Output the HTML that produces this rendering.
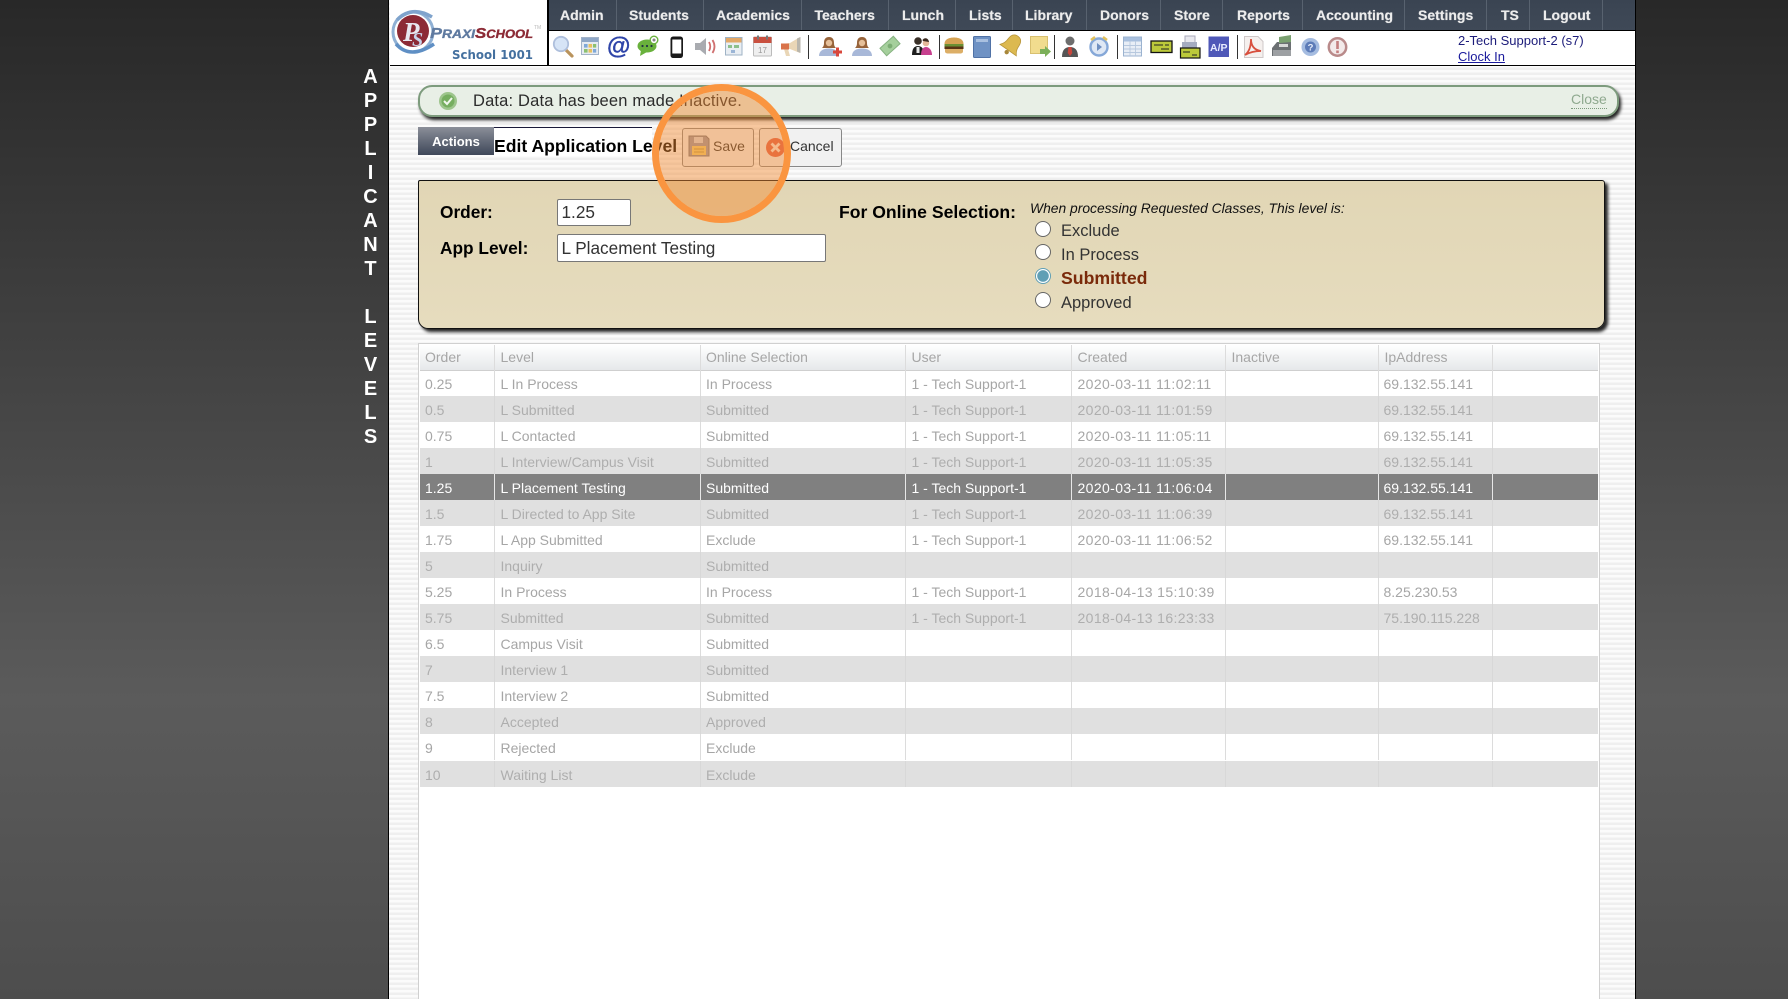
<!DOCTYPE html>
<html lang="en"><head><meta charset="utf-8"><title>Applicant Levels</title>
<style>
*{box-sizing:border-box}
html,body{margin:0;padding:0;width:1788px;height:999px;overflow:hidden}
body{position:relative;font-family:"Liberation Sans",Arial,sans-serif;background:linear-gradient(#282828 0,#3a3a3a 25%,#5b5b5b 70%,#4d4d4d 100%)}
.a{position:absolute}
#main{left:388px;top:0;width:1248px;height:999px;border-left:1.5px solid #000;border-right:1.5px solid #000;background:repeating-linear-gradient(#fbfbfb 0,#fbfbfb 2.5px,#efefef 2.5px,#efefef 5px)}
#side{left:350.5px;top:64.5px;width:40px;text-align:center;color:#fff;font:bold 20px/24px "Liberation Sans",Arial,sans-serif}
#hdr{left:389.5px;top:0;width:1245px;height:66px;background:#fff;border-bottom:1.5px solid #000}
#navbg{left:547px;top:0;width:1088px;height:31px;background:linear-gradient(#3a4452,#3f4957);border-bottom:1.5px solid #000;border-left:1.5px solid #000}
#vl{left:547px;top:0;width:1.5px;height:65px;background:#000}
.t{position:absolute;top:0;height:30px;line-height:30px;color:#ececec;font-weight:bold;font-size:14px;border-right:1px solid #58626f;padding-left:13px;white-space:nowrap;text-shadow:0 0 .6px #ececec}
#usr{left:1458px;top:33px;font-size:13px;line-height:16px;color:#1c1c7a}
#usr u{color:#1a1a9c}
#alert{left:418px;top:85px;width:1201px;height:32px;background:#e8efe6;border:2.5px solid #7d9b7d;border-radius:14px;box-shadow:2px 3px 3px #222}
#alerttx{left:473px;top:91px;font-size:16.5px;letter-spacing:.17px;line-height:20px;color:#2b2b2b}
#close{left:1571px;top:91px;font-size:14px;line-height:17px;color:#8fa98f;border-bottom:1px dotted #7d9b7d}
#act{left:418px;top:127px;width:76px;height:28px;background:linear-gradient(#8b8f99,#3e4759);color:#fff;font-weight:bold;font-size:13px;line-height:29.5px;text-align:center}
#ttl{left:494px;top:127px;width:158px;height:29px;background:#fff;border-top:1.5px solid #1a1a3a}
#ttltx{left:494px;top:135px;font-weight:bold;font-size:17.6px;line-height:22px;color:#000;white-space:nowrap}
.btn{position:absolute;top:128px;height:39px;background:#f1f1f1;border:1px solid #888;border-radius:3px;font-size:14px;line-height:35px;color:#333}
#panel{left:418px;top:180px;width:1187px;height:149px;background:linear-gradient(#e1d6b5,#e6dcbe);border:1.5px solid #111;border-radius:2px 3px 10px 10px;box-shadow:3px 3px 3px #222}
.lb{position:absolute;font-weight:bold;font-size:17.3px;line-height:20px;color:#000;white-space:nowrap}
.inp{position:absolute;background:#fff;border:1px solid #777;border-radius:2px;font-size:17.2px;color:#333;padding-left:3.5px}
.rad{position:absolute;left:1035px;width:16px;height:16px;border-radius:50%;background:#fff;border:1.5px solid #666}
.rl{position:absolute;left:1061px;font-size:16.5px;line-height:20px;color:#333}
#tbl{left:418px;top:343px;width:1182px;height:656px;background:#fff;border:1.5px solid #d0d0d0;border-bottom:0}
.g{display:grid;grid-template-columns:75px 206px 205px 166px 154px 153px 114px 105px;position:absolute;left:.5px;width:1178.5px;height:26.02px;font-size:14px;line-height:28.5px;color:#a6a6a6}
.g div{border-right:1px solid #dcdcdc;padding-left:6px;white-space:nowrap;overflow:hidden}
.g div:first-child{padding-left:5.5px}
.g div:nth-child(3){padding-left:5.5px}
.g div:nth-child(5){letter-spacing:.38px}
.g div:nth-child(7){padding-left:5px}
.g div:last-child{border-right:0}
.h{background:linear-gradient(#fff,#e6e8ea);height:26.5px;border-bottom:1.5px solid #cfcfcf;top:.5px;line-height:25px}
.h div:nth-child(5){letter-spacing:0}
.e{background:#e0e0e0;color:#aeaeae}
.e div{border-right-color:#d8d8d8}
.s{background:#808080;color:#fff}
.s div{border-right-color:#e8e8e8}
#circ{left:652px;top:84px;width:139px;height:139px;border-radius:50%;border:7px solid #fa9540;background:rgba(242,138,48,.46);background-clip:padding-box}
</style></head>
<body>
<div class="a" id="main"></div>
<div class="a" id="side">A<br>P<br>P<br>L<br>I<br>C<br>A<br>N<br>T<br>&nbsp;<br>L<br>E<br>V<br>E<br>L<br>S</div>
<div class="a" id="hdr"></div>
<div class="a" id="navbg"></div>
<div class="a" id="vl"></div>
<div class="t" style="left:547px;width:70px">Admin</div>
<div class="t" style="left:617px;width:87px;padding-left:12px">Students</div>
<div class="t" style="left:704px;width:98px;padding-left:12px">Academics</div>
<div class="t" style="left:802px;width:87px;padding-left:12.5px">Teachers</div>
<div class="t" style="left:889px;width:67px;padding-left:13px">Lunch</div>
<div class="t" style="left:956px;width:57px;padding-left:13px">Lists</div>
<div class="t" style="left:1013px;width:74px;padding-left:12px">Library</div>
<div class="t" style="left:1087px;width:74px;padding-left:13px">Donors</div>
<div class="t" style="left:1161px;width:62px;padding-left:13px">Store</div>
<div class="t" style="left:1223px;width:80px;padding-left:14px">Reports</div>
<div class="t" style="left:1303px;width:102px;padding-left:13px">Accounting</div>
<div class="t" style="left:1405px;width:82px;padding-left:13px">Settings</div>
<div class="t" style="left:1487px;width:43px;padding-left:14px">TS</div>
<div class="t" style="left:1530px;width:73px;padding-left:13px">Logout</div>

<svg class="a" style="left:0;top:0" width="1788" height="66" viewBox="0 0 1788 66">
<!-- logo -->
<ellipse cx="413" cy="32" rx="20" ry="20" fill="none" stroke="#8fb0d4" stroke-width="3"/>
<path d="M396 44 Q410 60 434 44" fill="none" stroke="#5f8fc4" stroke-width="3.5"/>
<path d="M397 20 Q412 5 432 17" fill="none" stroke="#7fa3cc" stroke-width="3.5"/>
<circle cx="413" cy="31" r="16" fill="#8c2a35"/>
<text x="403" y="41" font-family="Liberation Serif,serif" font-style="italic" font-weight="bold" font-size="27" fill="#e8e8f0">P</text>
<text x="412" y="46" font-family="Liberation Serif,serif" font-style="italic" font-weight="bold" font-size="20" fill="#c8d4ea">S</text>
<text x="430" y="38" font-family="Liberation Sans,sans-serif" font-style="italic" font-weight="bold" font-size="15" fill="#5f7aa0" stroke="#5f7aa0" stroke-width=".35" textLength="45" lengthAdjust="spacingAndGlyphs">P<tspan font-size="11.5">RAXI</tspan></text>
<text x="475" y="38" font-family="Liberation Sans,sans-serif" font-style="italic" font-weight="bold" font-size="15" fill="#8c2a35" stroke="#8c2a35" stroke-width=".35" textLength="58" lengthAdjust="spacingAndGlyphs">S<tspan font-size="11.5">CHOOL</tspan></text>
<text x="534" y="29" font-family="Liberation Sans,sans-serif" font-size="5" fill="#bbb">TM</text>
<text x="452" y="59" font-family="DejaVu Sans,sans-serif" font-weight="bold" font-size="12" fill="#44709f" textLength="81" lengthAdjust="spacingAndGlyphs">School 1001</text>
<!-- magnifier -->
<line x1="566" y1="50" x2="572" y2="56" stroke="#b9935c" stroke-width="3.2" stroke-linecap="round"/>
<circle cx="561" cy="44" r="7.2" fill="#d6e4f6" stroke="#aebfdc" stroke-width="1.8"/>
<!-- grid cal -->
<rect x="581.5" y="37.5" width="17" height="17" fill="#e6ebf2" stroke="#a3b3c8"/><rect x="582" y="38" width="16" height="4" fill="#8fa7c7"/>
<rect x="584" y="44" width="3.6" height="3.6" fill="#7fa8d8"/><rect x="588.5" y="44" width="3.6" height="3.6" fill="#e8c060"/><rect x="593" y="44" width="3.2" height="3.6" fill="#8cc070"/><rect x="584" y="49" width="3.6" height="3.6" fill="#8cc070"/><rect x="588.5" y="49" width="3.6" height="3.6" fill="#e8c060"/><rect x="593" y="49" width="3.2" height="3.6" fill="#7fa8d8"/>
<!-- @ -->
<text x="607" y="54" font-family="Liberation Sans,sans-serif" font-weight="bold" font-size="24" fill="#2e44a8" stroke="#2e44a8" stroke-width=".3">@</text>
<!-- chat -->
<ellipse cx="647" cy="46" rx="9.5" ry="6.5" fill="#69b13c"/><path d="M641 50 L640 56 L647 52Z" fill="#69b13c"/>
<circle cx="642.5" cy="46" r="1.1" fill="#234"/><circle cx="647" cy="46" r="1.1" fill="#234"/><circle cx="651.5" cy="46" r="1.1" fill="#234"/>
<circle cx="654" cy="40" r="3.8" fill="#fff" stroke="#69b13c" stroke-width="1.4"/><path d="M652.4 40H655.6M654 38.4V41.6" stroke="#555" stroke-width=".9"/>
<!-- phone -->
<rect x="670.5" y="36.5" width="12.5" height="21.5" rx="2.6" fill="#1a1a1a"/><rect x="672.3" y="39.5" width="9" height="14" fill="#fff"/>
<!-- speaker -->
<path d="M695 43H700L706 38V55L700 50H695Z" fill="#a9abb0"/><path d="M709 42Q711.5 46.5 709 51" fill="none" stroke="#d07070" stroke-width="1.8"/><path d="M712.5 40Q716.5 46.5 712.5 53" fill="none" stroke="#d07070" stroke-width="1.8"/>
<!-- table cal -->
<rect x="725.5" y="37.5" width="16.5" height="17.5" fill="#e9eef3" stroke="#9fb3c6"/><rect x="726" y="38" width="15.5" height="4.5" fill="#e2a868"/><rect x="728" y="45" width="4" height="3" fill="#8cbf8c"/><rect x="734" y="45" width="5" height="3" fill="#8cbf8c"/><rect x="731" y="50" width="4" height="3" fill="#9bb5d6"/>
<!-- calendar -->
<rect x="753.5" y="37" width="18" height="19" rx="1" fill="#efefef" stroke="#bbb"/><rect x="753.5" y="37" width="18" height="6" fill="#c9503f"/><rect x="757" y="35.5" width="2" height="4" fill="#777"/><rect x="766" y="35.5" width="2" height="4" fill="#777"/>
<text x="758" y="53" font-family="Liberation Sans,sans-serif" font-size="8" fill="#999">17</text>
<!-- megaphone -->
<path d="M781 44L790 43L800 37V53L790 49L788 49L790 56H786L784 49L781 49Z" fill="#e9d6b6"/><path d="M781 43.5H789V49.5H781Z" fill="#d9734a"/><path d="M797 38.5L800.5 37V53L797 51.5Z" fill="#b9b6ad"/>
<rect x="808" y="35" width="1" height="24" fill="#333"/>
<!-- person plus -->
<path d="M829 37c-4 0-5 3-5 6 0 3-1 4-2 5h14c-1-1-2-2-2-5 0-3-1-6-5-6z" fill="#97633a"/><circle cx="829" cy="43" r="3.2" fill="#e6c09a"/><path d="M819 56c0-5 4-7.5 10-7.5s9 2.5 9 7.5z" fill="#a8b8d8"/><path d="M836 47.5h3v3h3v3h-3v3h-3v-3h-3v-3h3z" fill="#d8473c"/>
<!-- person -->
<path d="M862 37c-4 0-5 3-5 6 0 3-1 4-2 5h14c-1-1-2-2-2-5 0-3-1-6-5-6z" fill="#97633a"/><circle cx="862" cy="43" r="3.2" fill="#e6c09a"/><path d="M852 56c0-5 4-7.5 10-7.5s10 2.5 10 7.5z" fill="#a8b8d8"/>
<!-- money -->
<g transform="rotate(-42 890 46)"><rect x="881" y="41" width="18" height="10" fill="#a5cf9c" stroke="#86b280"/><circle cx="890" cy="46" r="2.4" fill="#7cad74"/></g>
<!-- people -->
<circle cx="918" cy="41" r="3.8" fill="#3a3028"/><path d="M912 55c0-6 2-9 6-9s6 3 6 9z" fill="#1e1e1e"/><circle cx="926" cy="43" r="3.3" fill="#e4b99a"/><path d="M922.5 40c2-3 6-2 6.5 2l-6-1z" fill="#3a2a20"/><path d="M921 55c0-5 2-8 5-8s6 3 6 8z" fill="#c73f8e"/><rect x="916.5" y="47" width="3" height="6" fill="#e8e8e8"/>
<rect x="939" y="35" width="1" height="24" fill="#333"/>
<!-- burger -->
<path d="M944.5 44c0-5 5-6.5 9.5-6.5s9.5 1.5 9.5 6.5z" fill="#d6a354"/><rect x="944.5" y="44" width="19" height="2.5" fill="#6b8f33"/><rect x="944.5" y="46.5" width="19" height="2.5" fill="#5a3415"/><path d="M945 49h18v2.5c0 1-1 2-3 2h-12c-2 0-3-1-3-2z" fill="#dcae66"/>
<!-- book -->
<rect x="973.5" y="36.5" width="17" height="21" rx="1" fill="#6f92c4" stroke="#5072a6"/><rect x="976" y="39" width="12" height="3" fill="#a9c0e0"/>
<!-- bell -->
<g transform="rotate(35 1011 46)"><path d="M1011 34c-5 0-6.5 3.5-6.5 8.5 0 5-2.5 7-3.5 8.5h20c-1-1.5-3.5-3.5-3.5-8.5 0-5-1.5-8.5-6.5-8.5z" fill="#dcb950" stroke="#b8963c" stroke-width=".8"/><circle cx="1011" cy="53.5" r="2.2" fill="#a8873a"/></g>
<!-- note arrow -->
<rect x="1030.5" y="36.5" width="17" height="17" fill="#f1dc8e" stroke="#d8c070"/><path d="M1040 49h5v-3l6 5.5-6 5.5v-3h-5z" fill="#7cb05a"/>
<rect x="1054" y="35" width="1" height="24" fill="#333"/>
<!-- man -->
<circle cx="1070" cy="41" r="4.5" fill="#6d6d6d"/><path d="M1062 57c0-7 3-10 8-10s8 3 8 10z" fill="#555"/><path d="M1068.5 47h3l.8 6-2.3 3-2.3-3z" fill="#c9463c"/>
<!-- clock -->
<circle cx="1099" cy="47" r="8.5" fill="#dfe8f5" stroke="#86a8d8" stroke-width="2.4"/><path d="M1097 43l5 4-5 4z" fill="#6f8fc0"/><path d="M1091 40l4-3M1107 40l-4-3" stroke="#e3c25c" stroke-width="2.5"/>
<rect x="1117" y="35" width="1" height="24" fill="#333"/>
<!-- table -->
<rect x="1123.5" y="37" width="18" height="19" fill="#e8eef6" stroke="#9bb3d0"/><rect x="1124" y="37.5" width="17" height="4" fill="#a9c0de"/><path d="M1124 45.5H1141M1124 49H1141M1124 52.5H1141M1130 41V56M1135.5 41V56" stroke="#b7c8de" stroke-width=".9"/>
<!-- check -->
<rect x="1151" y="41" width="21" height="11.5" fill="#bcc93a" stroke="#111" stroke-width="1.3"/><path d="M1154 45H1163M1165 45H1169M1161 49H1169" stroke="#222" stroke-width="1.1"/>
<!-- printer check -->
<rect x="1185" y="36" width="10" height="8" fill="#e8e8ee" stroke="#aab"/><rect x="1182" y="42" width="15" height="7" fill="#a5acc0"/><rect x="1180.5" y="48" width="19.5" height="10" fill="#bcc93a" stroke="#111" stroke-width="1.2"/><path d="M1183 52H1190M1192 55H1197" stroke="#222" stroke-width="1"/>
<!-- A/P -->
<rect x="1208.5" y="36.5" width="20.5" height="20.5" fill="#4f58b8"/><text x="1210" y="51" font-family="Liberation Sans,sans-serif" font-weight="bold" font-size="10.5" fill="#e8ecff" textLength="17.5" lengthAdjust="spacingAndGlyphs">A/P</text>
<rect x="1237" y="35" width="1" height="24" fill="#333"/>
<!-- pdf -->
<path d="M1244.5 36.5H1258L1263 41.5V57.5H1244.5Z" fill="#f5f0ee" stroke="#cfc8c8"/><path d="M1245 55c4-3 6-9 6-16 0 7 3 11 10 12-6 0-11 1-16 4z" fill="none" stroke="#d8503f" stroke-width="1.8"/>
<!-- cash register -->
<path d="M1272 48l5-6h14v14h-19z" fill="#6b6f72"/><path d="M1279 37l12-2v7l-12 1z" fill="#7aa070"/><rect x="1273" y="50" width="18" height="6" fill="#9da0a3"/><rect x="1279" y="44" width="9" height="3" fill="#d8d8d8"/>
<!-- help -->
<circle cx="1310.5" cy="47" r="9" fill="#a5bce0"/><circle cx="1310.5" cy="47" r="5.5" fill="#5d7cb8"/><text x="1307.6" y="50.5" font-family="Liberation Sans,sans-serif" font-weight="bold" font-size="9.5" fill="#e8eefa">?</text>
<!-- stop -->
<circle cx="1337.5" cy="47" r="8.7" fill="#f3eaea" stroke="#b98a8a" stroke-width="2.5"/><rect x="1336.2" y="41" width="2.6" height="8" fill="#c47f7f"/><rect x="1336.2" y="50.5" width="2.6" height="2.6" fill="#c47f7f"/>
</svg>

<div class="a" id="usr">2-Tech Support-2 (s7)<br><u>Clock In</u></div>

<div class="a" id="alert"></div>
<svg class="a" style="left:438px;top:91px" width="20" height="20" viewBox="0 0 20 20"><circle cx="10" cy="10" r="9" fill="#9dc58c"/><circle cx="10" cy="10" r="6.5" fill="#76ae60"/><path d="M6 10l3 3 5-6" fill="none" stroke="#f2f7ee" stroke-width="2"/></svg>
<div class="a" id="alerttx">Data: Data has been made Inactive.</div>
<div class="a" id="close">Close</div>

<div class="a" id="act">Actions</div>
<div class="a" id="ttl"></div>
<div class="a" id="ttltx">Edit Application Level</div>
<div class="btn" style="left:682px;width:72px;padding-left:30px">Save</div>
<div class="btn" style="left:759px;width:83px;padding-left:30px">Cancel</div>
<svg class="a" style="left:688px;top:135px" width="22" height="22" viewBox="0 0 22 22"><path d="M1 1H18L21 4V21H1Z" fill="#9a98a4" stroke="#77757f"/><rect x="6" y="2" width="9" height="6" fill="#d6d6dc"/><rect x="4" y="11" width="14" height="9" fill="#f0d070"/><path d="M6 14H16M6 17H16" stroke="#b59a48"/></svg>
<svg class="a" style="left:765px;top:137px" width="21" height="21" viewBox="0 0 21 21"><circle cx="10.5" cy="10.5" r="9.5" fill="#e2604a"/><path d="M6.5 6.5L14.5 14.5M14.5 6.5L6.5 14.5" stroke="#f7e6dc" stroke-width="2.8"/></svg>

<div class="a" id="panel"></div>
<div class="lb" style="left:440px;top:201.5px">Order:</div>
<div class="inp" style="left:557px;top:199px;width:74px;height:27px;line-height:25px">1.25</div>
<div class="lb" style="left:440px;top:238px">App Level:</div>
<div class="inp" style="left:557px;top:234px;width:269px;height:28px;line-height:27px">L Placement Testing</div>
<div class="lb" style="left:839px;top:201.5px;font-size:17.6px">For Online Selection:</div>
<div class="a" style="left:1030px;top:199px;font-size:13.85px;font-style:italic;line-height:18px;color:#111;white-space:nowrap">When processing Requested Classes, This level is:</div>
<div class="rad" style="top:221px"></div><div class="rl" style="top:220.5px">Exclude</div>
<div class="rad" style="top:244px"></div><div class="rl" style="top:244.5px">In Process</div>
<div class="rad" style="top:268px;background:radial-gradient(#5f9fb5 0,#5f9fb5 55%,#fff 62%);border-color:#5f9fb5"></div><div class="rl" style="top:268px;font-weight:bold;font-size:17.7px;color:#7a2a0a">Submitted</div>
<div class="rad" style="top:292px"></div><div class="rl" style="top:293px">Approved</div>

<div class="a" id="tbl">
<div class="g h"><div>Order</div><div>Level</div><div>Online Selection</div><div>User</div><div>Created</div><div>Inactive</div><div style="padding-left:6px">IpAddress</div><div></div></div>
<div class="g" style="top:26.2px"><div>0.25</div><div>L In Process</div><div>In Process</div><div>1 - Tech Support-1</div><div>2020-03-11 11:02:11</div><div></div><div>69.132.55.141</div><div></div></div>
<div class="g e" style="top:52.22px"><div>0.5</div><div>L Submitted</div><div>Submitted</div><div>1 - Tech Support-1</div><div>2020-03-11 11:01:59</div><div></div><div>69.132.55.141</div><div></div></div>
<div class="g" style="top:78.24px"><div>0.75</div><div>L Contacted</div><div>Submitted</div><div>1 - Tech Support-1</div><div>2020-03-11 11:05:11</div><div></div><div>69.132.55.141</div><div></div></div>
<div class="g e" style="top:104.26px"><div>1</div><div>L Interview/Campus Visit</div><div>Submitted</div><div>1 - Tech Support-1</div><div>2020-03-11 11:05:35</div><div></div><div>69.132.55.141</div><div></div></div>
<div class="g s" style="top:130.28px"><div>1.25</div><div>L Placement Testing</div><div>Submitted</div><div>1 - Tech Support-1</div><div>2020-03-11 11:06:04</div><div></div><div>69.132.55.141</div><div></div></div>
<div class="g e" style="top:156.3px"><div>1.5</div><div>L Directed to App Site</div><div>Submitted</div><div>1 - Tech Support-1</div><div>2020-03-11 11:06:39</div><div></div><div>69.132.55.141</div><div></div></div>
<div class="g" style="top:182.32px"><div>1.75</div><div>L App Submitted</div><div>Exclude</div><div>1 - Tech Support-1</div><div>2020-03-11 11:06:52</div><div></div><div>69.132.55.141</div><div></div></div>
<div class="g e" style="top:208.34px"><div>5</div><div>Inquiry</div><div>Submitted</div><div></div><div></div><div></div><div></div><div></div></div>
<div class="g" style="top:234.36px"><div>5.25</div><div>In Process</div><div>In Process</div><div>1 - Tech Support-1</div><div>2018-04-13 15:10:39</div><div></div><div>8.25.230.53</div><div></div></div>
<div class="g e" style="top:260.38px"><div>5.75</div><div>Submitted</div><div>Submitted</div><div>1 - Tech Support-1</div><div>2018-04-13 16:23:33</div><div></div><div>75.190.115.228</div><div></div></div>
<div class="g" style="top:286.4px"><div>6.5</div><div>Campus Visit</div><div>Submitted</div><div></div><div></div><div></div><div></div><div></div></div>
<div class="g e" style="top:312.42px"><div>7</div><div>Interview 1</div><div>Submitted</div><div></div><div></div><div></div><div></div><div></div></div>
<div class="g" style="top:338.44px"><div>7.5</div><div>Interview 2</div><div>Submitted</div><div></div><div></div><div></div><div></div><div></div></div>
<div class="g e" style="top:364.46px"><div>8</div><div>Accepted</div><div>Approved</div><div></div><div></div><div></div><div></div><div></div></div>
<div class="g" style="top:390.48px"><div>9</div><div>Rejected</div><div>Exclude</div><div></div><div></div><div></div><div></div><div></div></div>
<div class="g e" style="top:416.5px"><div>10</div><div>Waiting List</div><div>Exclude</div><div></div><div></div><div></div><div></div><div></div></div>
</div>

<div class="a" id="circ"></div>
</body></html>
